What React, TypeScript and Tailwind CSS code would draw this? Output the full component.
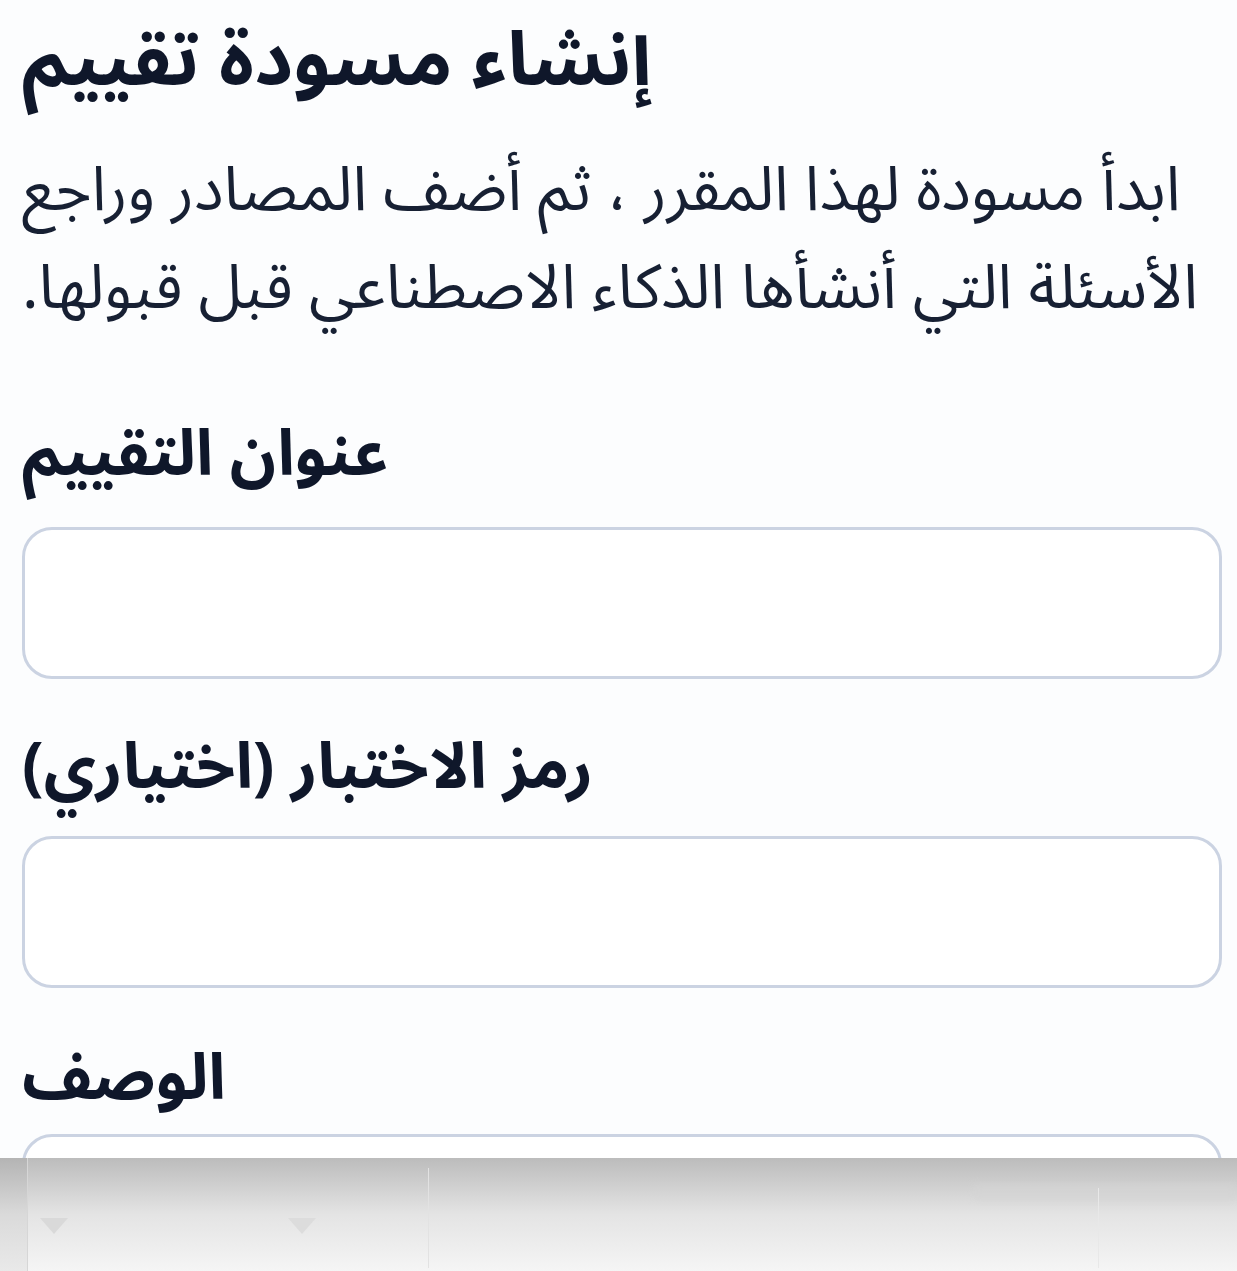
import React from 'react';

const FONT = { fontFamily: '"Noto Sans Arabic", "Noto Naskh Arabic", "DejaVu Sans", sans-serif' };

function Field({ label, gap }: { label: string; gap: string }) {
  return (
    <div className="flex flex-col">
      <label className={`text-left text-[64px] font-bold leading-[90px] text-[#0f172a] ${gap}`}>{label}</label>
      <div className="w-full h-[152px] shrink-0 rounded-[30px] border-[3px] border-[#cbd3e2] bg-white" />
    </div>
  );
}

export default function App() {
  return (
    <div className="w-[1237px] h-[1271px] flex flex-col bg-white overflow-hidden" style={FONT}>
      <div dir="rtl" className="flex-1 overflow-hidden bg-[#fcfdfe] pl-[22px] pr-[15px]">
        <h1 className="text-left text-[75px] font-bold leading-[122px] text-[#0f172a]">إنشاء مسودة تقييم</h1>
        <p className="mt-[20px] text-left text-[62px] leading-[98px] text-[#172033]">
          ابدأ مسودة لهذا المقرر ، ثم أضف المصادر وراجع الأسئلة التي أنشأها الذكاء الاصطناعي قبل قبولها.
        </p>
        <div className="mt-[72px] flex flex-col">
          <Field label="عنوان التقييم" gap="mb-[27px]" />
          <div className="h-[44px]" />
          <Field label="رمز الاختبار (اختياري)" gap="mb-[23px]" />
          <div className="h-[46px]" />
          <Field label="الوصف" gap="mb-[10px]" />
        </div>
      </div>
      <div className="relative h-[113px] shrink-0 flex bg-gradient-to-b from-[#bcbcbc] via-[#e4e4e4] to-[#f5f5f5]">
        <div className="w-[28px] h-full border-r border-[#d6d6d6] bg-gradient-to-b from-[#b4b4b4] via-[#dadada] to-[#e9e9e9]" />
        <div className="flex-1 relative">
          <div className="absolute left-[12px] top-[60px] w-0 h-0 border-l-[14px] border-r-[14px] border-t-[16px] border-l-transparent border-r-transparent border-t-[#d9d9d9]" />
          <div className="absolute left-[260px] top-[60px] w-0 h-0 border-l-[14px] border-r-[14px] border-t-[16px] border-l-transparent border-r-transparent border-t-[#dcdcdc]" />
          <div className="absolute left-[945px] top-[26px] w-[264px] h-[16px] rounded-sm bg-[#d4d4d4] blur-[3px] opacity-60" />
          <div className="absolute left-[400px] top-[10px] w-[1px] h-[100px] bg-[#e2e2e2]" />
          <div className="absolute left-[1070px] top-[30px] w-[1px] h-[80px] bg-[#e8e8e8]" />
        </div>
      </div>
    </div>
  );
}
